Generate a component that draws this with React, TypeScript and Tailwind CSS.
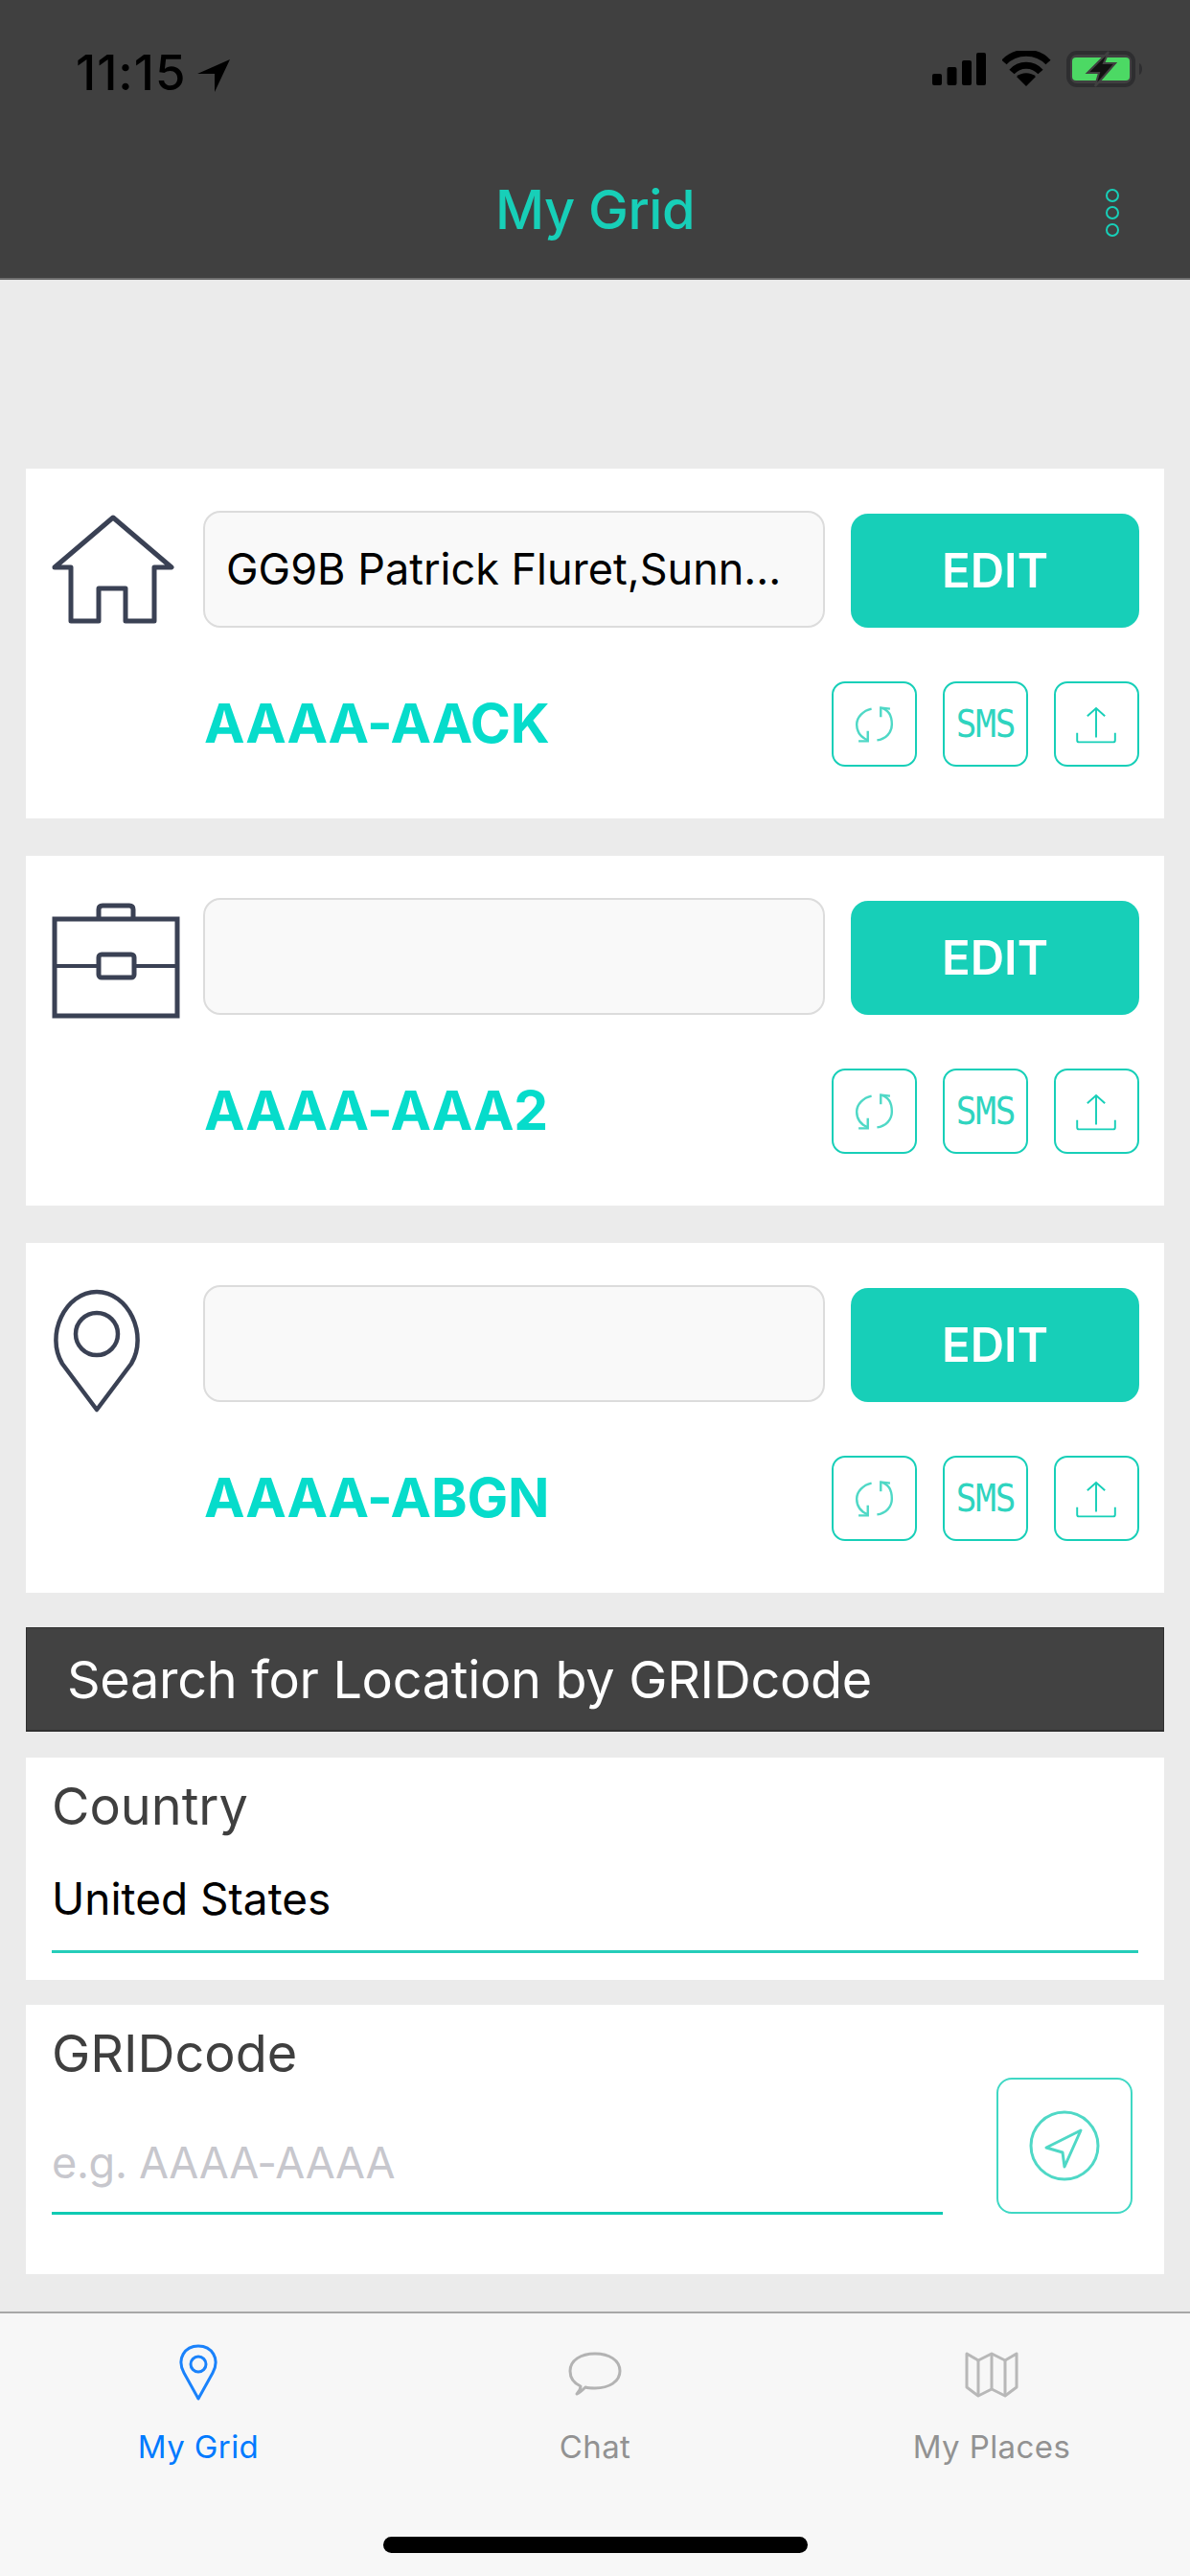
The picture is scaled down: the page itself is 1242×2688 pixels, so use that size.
const sans = 'font-["Inter",sans-serif]'

const places = [
  { icon: 'home', label: 'GG9B Patrick Fluret,Sunn...', code: 'AAAA-AACK' },
  { icon: 'work', label: '', code: 'AAAA-AAA2' },
  { icon: 'pin', label: '', code: 'AAAA-ABGN' },
]

function StatusBar() {
  return (
    <div className="flex h-[173px] items-start justify-between pl-[79px] pr-[49px] pt-[52px]">
      <div className="flex items-center gap-[10px]">
        <span className="text-[51px] leading-[48px] font-medium tracking-[1px] text-black">11:15</span>
        <svg width="36" height="36" viewBox="0 0 36 36" className="mt-[6px]">
          <path d="M35 1 L1 16 L19 16 L19 35 Z" fill="#000" />
        </svg>
      </div>
      <div className="flex items-center gap-[15px]">
        <svg width="58" height="38" viewBox="0 0 58 38">
          <rect x="0" y="24" width="10" height="12" rx="2" fill="#000" />
          <rect x="15.5" y="17" width="10" height="19" rx="2" fill="#000" />
          <rect x="31" y="10" width="10" height="26" rx="2" fill="#000" />
          <rect x="46" y="2" width="10" height="34" rx="2" fill="#000" />
        </svg>
        <svg width="52" height="38" viewBox="0 0 52 38">
          <path d="M2 12 C14 -1 36 -1 48 12" fill="none" stroke="#000" strokeWidth="7" />
          <path d="M10 22 C18 13 32 13 40 22" fill="none" stroke="#000" strokeWidth="7" />
          <path d="M25 37 L15 27 C20 22 30 22 35 27 Z" fill="#000" />
        </svg>
        <svg width="80" height="40" viewBox="0 0 80 40">
          <rect x="2" y="3" width="68" height="34" rx="9" fill="none" stroke="#2e2e30" strokeWidth="4" />
          <rect x="6" y="8" width="60" height="24" rx="4" fill="#4cd964" />
          <path d="M76 14 C80 15 80 25 76 26 Z" fill="#2e2e30" />
          <path d="M44 2 L22 24 H34 L30 38 L51 14 H39 Z" fill="#111" stroke="#404040" strokeWidth="2" />
        </svg>
      </div>
    </div>
  )
}

function Header() {
  return (
    <header className="h-[292px] shrink-0 border-b-[2px] border-[#6e6e6e] bg-[#404040]">
      <StatusBar />
      <div className="relative flex h-[92px] items-center justify-center">
        <h1 className="text-[56px] leading-[92px] font-medium tracking-[-0.5px] text-[#17cfb8]">My Grid</h1>
        <div className="absolute right-[74px] top-[24px] flex flex-col gap-[4px]">
          <span className="h-[14px] w-[14px] rounded-full border-[2.5px] border-[#17cfb8]" />
          <span className="h-[14px] w-[14px] rounded-full border-[2.5px] border-[#17cfb8]" />
          <span className="h-[14px] w-[14px] rounded-full border-[2.5px] border-[#17cfb8]" />
        </div>
      </div>
    </header>
  )
}

function PlaceIcon({ kind }: { kind: string }) {
  if (kind === 'home') {
    return (
      <svg width="128" height="114" viewBox="0 0 128 114" fill="none" stroke="#3a4154" strokeWidth="5" strokeLinejoin="round">
        <path d="M64 3 L125 55 H107 V111 H77 V77 H49 V111 H20 V55 H3 Z" />
      </svg>
    )
  }
  if (kind === 'work') {
    return (
      <svg width="134" height="122" viewBox="0 0 134 122" fill="none" stroke="#3a4154" strokeWidth="5">
        <rect x="3" y="18" width="128" height="101" />
        <path d="M3 67 H49 M86 67 H131" strokeWidth="4" />
        <rect x="49" y="55" width="37" height="24" rx="3" />
        <path d="M49 18 V8 Q49 4 53 4 H81 Q85 4 85 8 V18" />
      </svg>
    )
  }
  return (
    <svg width="94" height="130" viewBox="0 0 94 130" fill="none" stroke="#3a4154" strokeWidth="4.5">
      <path d="M47 126 L11 78 C-7 48 14 3 47 3 C80 3 101 48 83 78 Z" strokeLinejoin="round" />
      <circle cx="47" cy="47" r="22" />
    </svg>
  )
}

function RefreshIcon() {
  return (
    <svg width="88" height="88" viewBox="0 0 88 88" fill="none" stroke="#4fd8c6" strokeWidth="2.5">
      <path d="M51 26 C60 28 63 36 63 44 C63 53 56 60 47 61" />
      <path d="M61 27 L51 26 L51 36" />
      <path d="M41 27 C32 29 25 36 25 44 C25 52 30 58 37 61" />
      <path d="M27 62 L37 62 L37 51" />
    </svg>
  )
}

function UploadIcon() {
  return (
    <svg width="88" height="88" viewBox="0 0 88 88" fill="none" stroke="#17cfb8" strokeWidth="2">
      <path d="M43.5 27 V58" />
      <path d="M34 35 L43.5 26.5 L53 35" />
      <path d="M23 53 V61 Q23 63 25 63 H62 Q64 63 64 61 V53" />
    </svg>
  )
}

function SmallButton({ children }: { children: React.ReactNode }) {
  return (
    <button className="flex h-[89px] w-[89px] items-center justify-center rounded-[14px] border-[2.5px] border-[#17cfb8]">
      {children}
    </button>
  )
}

function PlaceCard({ icon, label, code }: { icon: string; label: string; code: string }) {
  return (
    <section className="h-[365px] bg-white pt-[44px]">
      <div className="flex h-[122px] items-start">
        <div className="w-[185px] pl-[27px] pt-[4px]">
          <PlaceIcon kind={icon} />
        </div>
        <div className="flex h-[122px] w-[649px] items-center rounded-[18px] border-[2px] border-[#dcdcdc] bg-[#f9f9f9] pl-[22px] text-[45px] text-black">
          {label}
        </div>
        <button className="ml-[27px] mt-[3px] h-[119px] w-[301px] rounded-[18px] bg-[#17cfb8] text-[49px] font-semibold text-white">
          EDIT
        </button>
      </div>
      <div className="mt-[56px] flex h-[89px] items-center pl-[186px]">
        <span className="flex-1 pb-[2px] text-[57px] font-bold tracking-[-0.2px] text-[#06dccb]">{code}</span>
        <div className="mr-[26px] flex gap-[27px]">
          <SmallButton><RefreshIcon /></SmallButton>
          <SmallButton>
            <span className="origin-center scale-y-[1.1] font-['DejaVu_Sans_Mono',monospace] text-[36px] leading-none tracking-[-1.2px] text-[#2fd4bf]">SMS</span>
          </SmallButton>
          <SmallButton><UploadIcon /></SmallButton>
        </div>
      </div>
    </section>
  )
}

function SearchForm() {
  return (
    <>
      <div className="mt-[36px] flex h-[109px] items-center border-[1px] border-b-[2px] border-[#2f2f2f] bg-[#424242] pl-[42px] text-[54px] tracking-[-0.3px] text-white">
        Search for Location by GRIDcode
      </div>
      <div className="mt-[27px] h-[232px] bg-white px-[27px] pt-[18px]">
        <p className="text-[54px] leading-[66px] text-[#3f3f3f]">Country</p>
        <div className="mt-[30px] h-[90px] border-b-[3px] border-[#25cdb9] pt-[6px] text-[46px] leading-[54px] text-black">
          United States
        </div>
      </div>
      <div className="mt-[26px] flex h-[281px] bg-white pl-[27px] pr-[33px]">
        <div className="w-[930px] pt-[18px]">
          <p className="text-[54px] leading-[66px] text-[#3f3f3f]">GRIDcode</p>
          <div className="mt-[43px] h-[92px] border-b-[3px] border-[#0fcbb3] pt-[11px] text-[45px] leading-[54px] tracking-[-0.3px] text-[#c7c7cd]">
            e.g. AAAA-AAAA
          </div>
        </div>
        <button className="ml-auto mt-[76px] flex h-[142px] w-[142px] items-center justify-center rounded-[16px] border-[2.5px] border-[#3fd8c4]">
          <svg width="74" height="74" viewBox="0 0 74 74" fill="none" stroke="#4fd8c6" strokeWidth="3" strokeLinejoin="round">
            <circle cx="37" cy="37" r="35" />
            <path d="M54 21 L18 39 L35 44 L37 59 Z" />
          </svg>
        </button>
      </div>
    </>
  )
}

function TabBar() {
  return (
    <footer className="mt-auto h-[276px] border-t-[2px] border-[#a8a8a8] bg-[#f7f7f7]">
      <div className="grid h-[186px] grid-cols-3">
        <div className="flex flex-col items-center">
          <div className="flex h-[92px] items-end">
            <svg width="40" height="60" viewBox="0 0 40 60" fill="none" stroke="#1a82fb" strokeWidth="3">
              <path d="M20 57 L5 30 C-3 15 6 2 20 2 C34 2 43 15 35 30 Z" strokeLinejoin="round" />
              <circle cx="20" cy="21" r="8" />
            </svg>
          </div>
          <span className="mt-[25px] text-[33px] leading-[44px] tracking-[0.4px] text-[#007aff]">My Grid</span>
        </div>
        <div className="flex flex-col items-center">
          <div className="flex h-[92px] items-end pb-[6px]">
            <svg width="56" height="46" viewBox="0 0 56 46" fill="none" stroke="#b3b3b3" strokeWidth="3">
              <path d="M13 36 C4 32 2 25 2 20 C2 9 13 2 28 2 C43 2 54 9 54 20 C54 31 43 38 28 38 C24 38 21 38 18 37 C15 40 12 43 9 44 C12 41 13 38 13 36 Z" strokeLinejoin="round" />
            </svg>
          </div>
          <span className="mt-[25px] text-[33px] leading-[44px] tracking-[0.4px] text-[#929292]">Chat</span>
        </div>
        <div className="flex flex-col items-center">
          <div className="flex h-[92px] items-end pb-[3px]">
            <svg width="56" height="50" viewBox="0 0 56 50" fill="none" stroke="#b8b8b8" strokeWidth="3" strokeLinejoin="round">
              <path d="M2 3 L14 10 L28 3 L42 10 L54 3 V38 L42 47 L28 40 L14 47 L2 38 Z" />
              <path d="M14 10 V47 M28 3 V40 M42 10 V47" />
            </svg>
          </div>
          <span className="mt-[25px] text-[33px] leading-[44px] tracking-[0.4px] text-[#929292]">My Places</span>
        </div>
      </div>
      <div className="mx-auto mt-[47px] h-[17px] w-[443px] rounded-full bg-black" />
    </footer>
  )
}

export default function App() {
  return (
    <div className={`flex h-[2688px] w-[1242px] flex-col overflow-hidden bg-[#ebebeb] ${sans}`}>
      <Header />
      <main className="px-[27px] pt-[197px]">
        <div className="flex flex-col gap-[39px]">
          {places.map((place) => (
            <PlaceCard key={place.code} {...place} />
          ))}
        </div>
        <SearchForm />
      </main>
      <TabBar />
    </div>
  )
}
